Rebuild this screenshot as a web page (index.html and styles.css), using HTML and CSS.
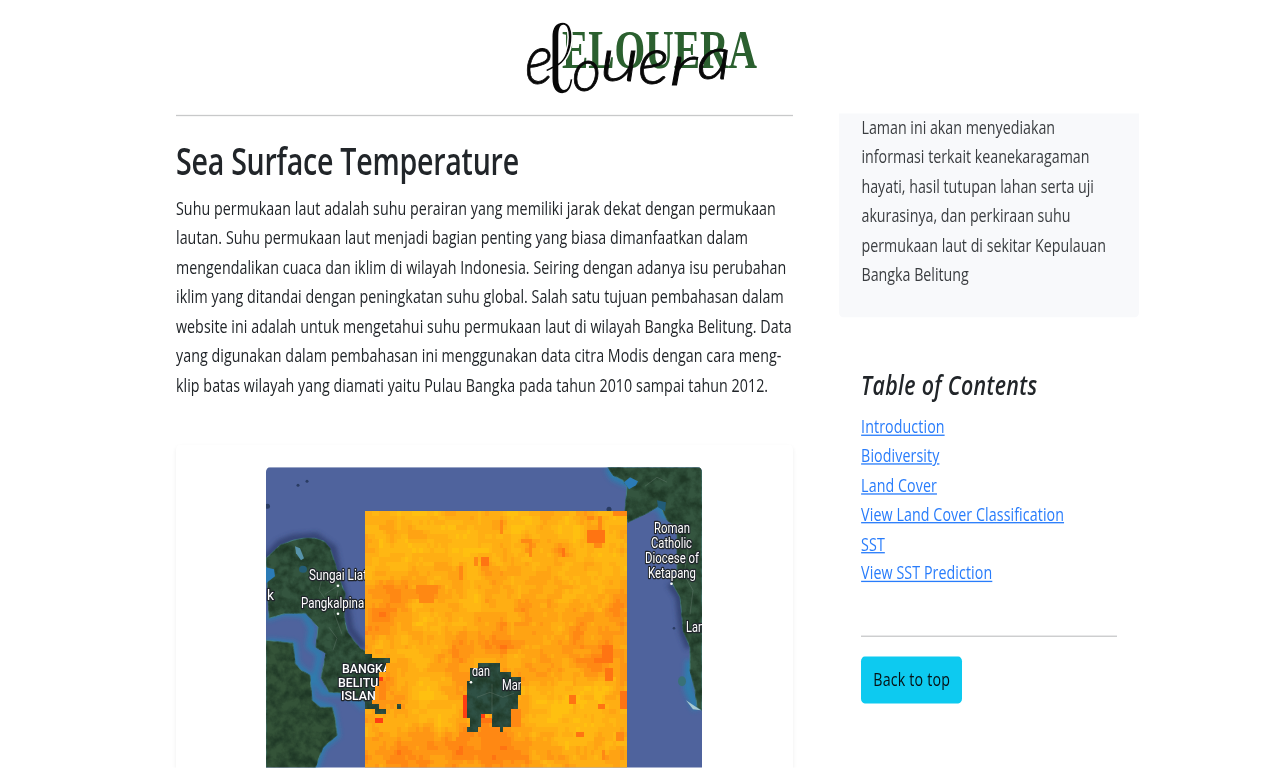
FILE: index.html
```html
<!DOCTYPE html>
<html lang="id">
<head>
<meta charset="utf-8">
<title>Elouera</title>
<link rel="stylesheet" href="styles.css">
</head>
<body>
<div class="page">
  <header class="site-header">
    <svg class="logo" viewBox="520 10 245 92" preserveAspectRatio="none" role="img" aria-label="Elouera">
      <text class="logo-serif" x="562" y="68" textLength="195" lengthAdjust="spacingAndGlyphs">ELOUERA</text>
      <g class="logo-script">
        <text x="525" y="84" font-size="72" textLength="28" lengthAdjust="spacingAndGlyphs">e</text>
        <text class="loop" x="545" y="93" font-size="102" textLength="29" lengthAdjust="spacingAndGlyphs">ℓ</text>
        <text x="572" y="91" font-size="60" textLength="29" lengthAdjust="spacingAndGlyphs">o</text>
        <text x="600" y="81" font-size="60" textLength="39" lengthAdjust="spacingAndGlyphs">u</text>
        <text x="638" y="84" font-size="68" textLength="31" lengthAdjust="spacingAndGlyphs">e</text>
        <text x="669" y="85" font-size="56" textLength="28" lengthAdjust="spacingAndGlyphs">r</text>
        <text x="697" y="79" font-size="60" textLength="34" lengthAdjust="spacingAndGlyphs">a</text>
      </g>
    </svg>
  </header>
  <div class="columns">
    <main class="article">
      <hr>
      <h2>Sea Surface Temperature</h2>
      <p>Suhu permukaan laut adalah suhu perairan yang memiliki jarak dekat dengan permukaan<br>lautan. Suhu permukaan laut menjadi bagian penting yang biasa dimanfaatkan dalam<br>mengendalikan cuaca dan iklim di wilayah Indonesia. Seiring dengan adanya isu perubahan<br>iklim yang ditandai dengan peningkatan suhu global. Salah satu tujuan pembahasan dalam<br>website ini adalah untuk mengetahui suhu permukaan laut di wilayah Bangka Belitung. Data<br>yang digunakan dalam pembahasan ini menggunakan data citra Modis dengan cara meng-<br>klip batas wilayah yang diamati yaitu Pulau Bangka pada tahun 2010 sampai tahun 2012.</p>
      <div class="map-card">
        <svg class="map" viewBox="266 467 436 301" preserveAspectRatio="none">
          <defs>
            <filter id="terrain" x="0" y="0" width="100%" height="100%" color-interpolation-filters="sRGB">
              <feTurbulence type="fractalNoise" baseFrequency=".09" numOctaves="4" seed="8" result="n"/>
              <feColorMatrix in="n" values="0 0 0 0 .12  0 0 0 0 .22  0 0 0 0 .15  1.8 1.4 0 0 -1.25" result="t"/>
              <feComposite in="t" in2="SourceGraphic" operator="in" result="c"/>
              <feMerge><feMergeNode in="SourceGraphic"/><feMergeNode in="c"/></feMerge>
            </filter>
            <filter id="soft"><feGaussianBlur stdDeviation="2.5"/></filter>
          </defs>
          <rect x="266" y="467" width="436" height="301" fill="#4f639d"/>
          <g fill="none" stroke="#293965" stroke-width="7" opacity=".75" filter="url(#soft)">
            <path d="M262 562l18-19 13-5 23-2 17 12 5 25 8 30 4 26 14 18"/>
            <path d="M670 583l9 14 2 20 2 15 6 16"/>
          </g>
          <g fill="none" stroke="#2286b4" stroke-width="6" opacity=".75" filter="url(#soft)">
            <path d="M267 618l17-6 20 2 8 14-3 18 11 8-5 24 8 14 20 1 14 7 8 8"/>
            <path d="M267 641l27 3 2 20 14 12 2 25 20 7 5 27-14 12-8 23"/>
            <path d="M609 467l5 9 11 5 14 4M646 505l14 0 6 14M690 660l-2 28 9 21" stroke-width="9"/>
          </g>
          <g fill="#34553f" stroke="#48858b" stroke-width=".8" filter="url(#terrain)">
            <path d="M266 558l14-13 13-5 10-2 12 0 9 3 6 7 5 15 5 17 5 13-1 24 4 16 12 15 7 4h34v61l-30-6-8-7-14-7-20-1-8-15 5-24-10-6 2-20-12-14-20 0-17 5z"/>
            <path fill="#345338" d="M266 640l27 3 2 20 6 7 9 5 2 25 8 7h12l3 10 2 18-14 12-8 21h-49z"/>
            <path d="M608 467l5 8 10 5 4 7-2 23 3 12 19-9 13-8 7 15 10 7v43l-5 13 8 14 2 20 1 13 7 17v23l5 20 2 17 5 3V467z"/>
            <path stroke="none" d="M365 650h40v66h-40zM466 660h60v76h-60z" fill="#2f5145"/>
          </g>
          <g fill="#2b7bb6">
            <path d="M266 567l8 2 1 7-9 7z"/><path d="M295 546l5 2 4 10-3 2-5-7z" fill="#5793aa"/>
            <ellipse cx="303" cy="569" rx="4" ry="3.5" fill="#235c75"/>
            <path d="M624 482l6-5 8 4-2 4-7 4z"/><path d="M657 500l9 2-1 9-7-4z" fill="#225c78"/>
            <path d="M686 700l9 6 6 4-8-1z" fill="#a8cbd2"/>
            <ellipse cx="682" cy="681" rx="4" ry="5" fill="#397177"/>
          </g>
          <g fill="#2a3c63"><circle cx="298" cy="485" r="1.5"/><circle cx="307" cy="481" r="1.5"/><circle cx="267.500" cy="506" r="2.500"/><circle cx="609" cy="509" r="2.500"/><circle cx="674" cy="628" r="1.300"/></g>
          <g fill="none" stroke="#718379" stroke-width=".6" opacity=".6"><path d="M314 567l8 13 11-6 4 12-12 8M324 570l-5 20 8 11M338 590l-4 22 8 22M329 627l8 11-4 12M680 535l8 15-4 24 9 16-3 24M645 486l12-9 10 5M477 697l13-5 13 5 11-4M492 684v35"/></g>
          <g class="map-labels">
            <text x="309" y="580" textLength="58" lengthAdjust="spacingAndGlyphs">Sungai Liat</text>
            <text x="301" y="608" textLength="76" lengthAdjust="spacingAndGlyphs">Pangkalpinang</text>
            <text x="267" y="600" textLength="7" lengthAdjust="spacingAndGlyphs">k</text>
            <g class="province"><text x="342" y="673" textLength="49" lengthAdjust="spacingAndGlyphs">BANGKA</text><text x="338" y="687" textLength="49" lengthAdjust="spacingAndGlyphs">BELITUN</text><text x="341" y="700" textLength="43" lengthAdjust="spacingAndGlyphs">ISLAND</text></g>
            <text x="654" y="533" textLength="36" lengthAdjust="spacingAndGlyphs">Roman</text>
            <text x="651" y="547.500" textLength="41" lengthAdjust="spacingAndGlyphs">Catholic</text>
            <text x="645" y="562.500" textLength="54" lengthAdjust="spacingAndGlyphs">Diocese of</text>
            <text x="648" y="577.500" textLength="48" lengthAdjust="spacingAndGlyphs">Ketapang</text>
            <text x="686" y="632" textLength="18" lengthAdjust="spacingAndGlyphs">Lan</text>
            <text x="472" y="676" textLength="18" lengthAdjust="spacingAndGlyphs">dan</text>
            <text x="502" y="690" textLength="22" lengthAdjust="spacingAndGlyphs">Man</text>
          </g>
          <g fill="#fff"><circle cx="338" cy="585.500" r="1.300"/><circle cx="338" cy="613.500" r="1.300"/><circle cx="671.500" cy="583.500" r="1.300"/><circle cx="471" cy="682" r="1.300"/></g>
          <g id="heat" shape-rendering="crispEdges"></g>
        </svg>
      </div>
    </main>
    <aside class="sidebar">
      <div class="about">
        <p>Laman ini akan menyediakan<br>informasi terkait keanekaragaman<br>hayati, hasil tutupan lahan serta uji<br>akurasinya, dan perkiraan suhu<br>permukaan laut di sekitar Kepulauan<br>Bangka Belitung</p>
      </div>
      <nav class="contents">
        <h4>Table of Contents</h4>
        <ol>
          <li><a href="#">Introduction</a></li>
          <li><a href="#">Biodiversity</a></li>
          <li><a href="#">Land Cover</a></li>
          <li><a href="#">View Land Cover Classification</a></li>
          <li><a href="#">SST</a></li>
          <li><a href="#">View SST Prediction</a></li>
        </ol>
        <hr>
        <a class="back" href="#">Back to top</a>
      </nav>
    </aside>
  </div>
</div>
<script src="heat.js"></script>
</body>
</html>
```
FILE: heat.js
```js
// Draws the sea surface temperature raster as one path per colour.
const X0 = 364.5, Y0 = 511, CW = 3.65, CH = 4.6, COLS = 72, ROWS = 56;
const colours = ['#ffc010', '#ffb713', '#ffae13', '#ffa313', '#ff9614', '#ff8813', '#ff7412', '#ff3e12'];

function hash(x, y) {
  let h = Math.imul(x + 31, 374761393) ^ Math.imul(y + 17, 668265263);
  h = Math.imul(h ^ (h >>> 13), 1274126177);
  return ((h ^ (h >>> 16)) >>> 0) / 4294967296;
}
function noise(x, y) {
  const i = Math.floor(x), j = Math.floor(y), u = x - i, v = y - j;
  const a = hash(i, j) * (1 - u) + hash(i + 1, j) * u;
  const b = hash(i, j + 1) * (1 - u) + hash(i + 1, j + 1) * u;
  return a * (1 - v) + b * v;
}

// Warm and cool areas: x, y, horizontal radius, vertical radius, strength
const areas = [
  [385, 600, 18, 26, 2.6], [424, 593, 15, 7, 3], [391, 535, 7, 9, 2], [412, 534, 7, 9, 1.5],
  [502, 526, 7, 13, 2.5], [530, 545, 9, 8, 2], [562, 551, 10, 6, 2.2], [619, 611, 12, 13, 3],
  [485, 568, 7, 8, 2], [525, 607, 25, 8, 2], [602, 659, 17, 16, 3.3], [578, 632, 12, 18, 2.3],
  [508, 645, 16, 8, 2.2], [382, 690, 18, 24, 2.5], [495, 700, 38, 45, 2], [500, 750, 55, 26, 2.4],
  [395, 755, 40, 25, 2.3], [500, 635, 90, 25, 1.2], [610, 620, 20, 30, 1.5], [380, 625, 22, 22, 1.5],
  [450, 755, 70, 30, 1.2], [430, 700, 36, 28, -0.8], [570, 710, 45, 40, -1.1], [427, 620, 20, 15, -1.2],
  [450, 660, 30, 18, 1], [540, 670, 30, 16, 1], [620, 690, 10, 40, 1.6], [480, 530, 100, 25, -0.6]
];
// Exact blocks: x, y, width, height, colour index
const blocks = [
  [587, 529, 18, 14, 6], [598, 517, 4, 12, 5], [588, 516, 8, 4, 5], [596, 543, 4, 5, 5],
  [498, 520, 5, 14, 5], [560, 547, 7, 9, 6], [458, 567, 6, 13, 5], [483, 558, 7, 9, 6],
  [473, 558, 4, 9, 5], [520, 538, 14, 5, 5], [527, 543, 7, 12, 5], [415, 586, 22, 9, 5],
  [421, 595, 14, 6, 5], [375, 716, 7, 5, 7], [379, 675, 4, 5, 7], [464, 697, 4, 22, 7],
  [468, 683, 4, 5, 7], [480, 715, 4, 5, 7], [494, 721, 5, 5, 7], [602, 643, 9, 14, 6],
  [606, 669, 7, 11, 6], [569, 697, 7, 5, 6], [599, 706, 7, 4, 6], [577, 733, 8, 5, 6],
  [617, 732, 6, 9, 5], [600, 748, 4, 13, 5], [621, 692, 6, 18, 6], [594, 657, 18, 8, 6],
  [614, 511, 13, 5, 5], [380, 680, 8, 20, 5], [512, 711, 8, 14, 5], [482, 716, 12, 5, 6]
];
// Land showing through the raster: x, y, width, height
const holes = [
  [364, 654, 9, 5], [364, 659, 25, 5], [364, 664, 22, 9], [364, 673, 15, 14], [364, 687, 11, 14],
  [364, 701, 8, 7], [372, 706, 8, 5], [375, 710, 11, 5], [396, 706, 4, 4],
  [477, 663, 22, 10], [471, 667, 8, 10], [472, 673, 40, 14], [468, 683, 54, 14], [512, 678, 10, 10],
  [468, 697, 49, 14], [468, 711, 14, 5], [472, 716, 10, 10], [468, 725, 8, 5], [468, 730, 4, 4],
  [494, 711, 18, 14], [501, 725, 4, 9], [482, 706, 12, 9]
];
const inside = (x, y, r) => x >= r[0] && x < r[0] + r[2] && y >= r[1] && y < r[1] + r[3];

const paths = colours.map(() => '');
for (let r = 0; r < ROWS; r++) {
  for (let c = 0; c < COLS; c++) {
    const x = X0 + (c + 0.5) * CW, y = Y0 + (r + 0.5) * CH;
    if (holes.some(h => inside(x, y, h))) continue;
    let v = noise(c / 5, r / 4) * 2.2 + noise(c / 2.2 + 90, r / 1.6 + 40) * 2.9 - 0.6 + hash(c, r) * 0.8;
    for (const [ax, ay, rx, ry, s] of areas) {
      const d = ((x - ax) / rx) ** 2 + ((y - ay) / ry) ** 2;
      v += s * Math.exp(-d * 1.1);
    }
    let k = Math.max(0, Math.min(5, Math.floor(v)));
    if (v > 6.2) k = 6;
    const block = blocks.find(b => inside(x, y, b));
    if (block) k = block[4];
    paths[k] += `M${X0 + c * CW} ${Y0 + r * CH}h${CW}v${CH}h-${CW}z`;
  }
}
document.getElementById('heat').innerHTML =
  paths.map((d, i) => `<path fill="${colours[i]}" d="${d}"/>`).join('');
```
FILE: styles.css
```css
* { box-sizing: border-box; }
html, body { margin: 0; height: 100%; overflow: hidden; background: #fff; }
body { font-family: "Open Sans", "Noto Sans", sans-serif; color: #212529; }

/* 1366 x 628 layout stretched over the window */
.page {
  width: 1366px;
  height: 628px;
  overflow: hidden;
  zoom: .93704;
  transform: scaleY(1.3051);
  transform-origin: 0 0;
  font-size: 15.2px;
  line-height: 24px;
  letter-spacing: .07px;
}
.site-header { height: 92.8px; padding: 8.2px 0 0 555px; }
.logo { display: block; width: 261.5px; height: 75.2px; overflow: visible; }
.logo-serif { font: 700 55px "Liberation Serif", serif; fill: #2b602f; letter-spacing: 0; }
.logo-script { font-family: Lato, sans-serif; font-style: italic; font-weight: 300; fill: #080808; stroke: #080808; stroke-width: .8; letter-spacing: 0; }
.logo-script .loop { font-family: "DejaVu Sans", sans-serif; font-style: normal; font-weight: 200; stroke: #fff; stroke-width: 1.6; }

.columns { display: flex; align-items: flex-start; gap: 49px; padding-left: 187.8px; }
.article { width: 658.6px; white-space: nowrap; }
hr { margin: 0; border: 0; border-top: 1px solid #c8c9ca; }
.article > hr { margin-top: 1.2px; }
h2 { margin: 17.4px 0 7.8px; font-size: 30.5px; line-height: 38.4px; font-weight: 600; letter-spacing: -.26px; }
p { margin: 0; }
.map-card {
  height: 300px;
  margin-top: 37.2px;
  padding: 18.500px 0 0 96.200px;
  border-radius: 4px;
  box-shadow: 0 2px 4px rgba(0, 0, 0, .075);
}
.map { display: block; width: 465.300px; height: 246.200px; border-radius: 4px 4px 0 0; }
.map-labels { font: 400 14.5px Roboto, sans-serif; fill: #fff; stroke: #20252b; stroke-width: 2.600px; stroke-linejoin: round; paint-order: stroke; letter-spacing: 0; }
.map-labels .province { font-size: 13.5px; font-weight: 500; }

.sidebar { width: 320px; white-space: nowrap; }
.about { height: 166.6px; margin-top: .6px; padding: 0 24px; border-radius: 0 0 4px 4px; color: #3a3d40; background: #f8f9fb; letter-spacing: 0; }
.about p { margin-top: -.8px; }
.contents { padding: 40.4px 23.6px 0; }
h4 { margin: 0 0 8.8px; font-size: 22.8px; line-height: 28.8px; font-style: italic; font-weight: 600; letter-spacing: .35px; }
.contents ol { letter-spacing: .1px; }
ol { margin: 0; padding: 0; list-style: none; }
.contents a { color: #287cfb; }
.contents hr { margin: 38.800px 0 16px; }
.contents .back {
  display: inline-block;
  width: 108px;
  height: 38px;
  padding: 7.800px 0;
  border-radius: 4px;
  background: #0dcaf0;
  color: #071114;
  text-align: center;
  text-decoration: none;
  letter-spacing: .2px;
}
```
